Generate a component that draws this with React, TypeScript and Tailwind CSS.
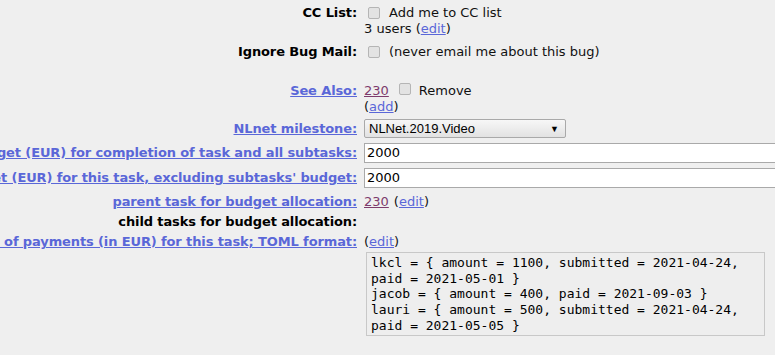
const link = 'text-[#5a67d8] underline';
const visited = 'text-[#7d3b6c] underline';

function Check() {
    return <span className="inline-block w-[12px] h-[12px] border border-[#b5b5b5] bg-[#e3e3e3] rounded-[2px]" />;
}

function Label({ children, href, h = 'h-4' }: { children: React.ReactNode; href?: boolean; h?: string }) {
    return (
        <div className={`${h} min-w-0 flex items-center justify-end whitespace-nowrap pr-[3px] font-bold tracking-[-0.12px]`}>
            {href ? <span className={link}>{children}</span> : <span className="text-black">{children}</span>}
        </div>
    );
}

export default function App() {
    return (
        <div
            className="w-[775px] h-[355px] overflow-hidden bg-[#efefef] text-[13px] leading-4 text-[#111]"
            style={{ fontFamily: '"DejaVu Sans", Verdana, sans-serif' }}
        >
            <div className="grid grid-cols-[360px_1fr] pt-[5px]">
                {/* CC list */}
                <Label>CC List:</Label>
                <div className="pl-[4px]">
                    <div className="h-4 flex items-center gap-[9px] pl-[4px]">
                        <Check />
                        <span>Add me to CC list</span>
                    </div>
                    <div className="h-4 flex items-center">
                        3 users (<span className={link}>edit</span>)
                    </div>
                </div>

                {/* ignore mail */}
                <div className="mt-[7px]"><Label>Ignore Bug Mail:</Label></div>
                <div className="mt-[7px] pl-[8px] h-4 flex items-center gap-[9px]">
                    <Check />
                    <span>(never email me about this bug)</span>
                </div>

                {/* see also */}
                <div className="mt-[23px]"><Label href>See Also:</Label></div>
                <div className="mt-[23px] pl-[4px]">
                    <div className="h-4 flex items-center">
                        <span className={visited}>230</span>
                        <span className="ml-[10px]"><Check /></span>
                        <span className="ml-[8px]">Remove</span>
                    </div>
                    <div className="h-4 flex items-center">
                        (<span className={link}>add</span>)
                    </div>
                </div>

                {/* milestone */}
                <div className="mt-[4px]"><Label href h="h-[19px]">NLnet milestone:</Label></div>
                <div className="mt-[4px] pl-[4px]">
                    <div
                        className="w-[202px] h-[19px] border border-[#a9a9a9] rounded-[2px] bg-gradient-to-b from-[#f7f7f7] to-[#e2e2e2] flex items-center justify-between pl-[4px] pr-[6px]"
                        style={{ fontFamily: '"Liberation Sans", Arial, sans-serif' }}
                    >
                        <span className="text-[13px] text-black">NLNet.2019.Video</span>
                        <span className="text-[9px] text-black">▼</span>
                    </div>
                </div>

                {/* budgets */}
                <div className="mt-[5px]"><Label href h="h-[20px]">Total budget (EUR) for completion of task and all subtasks:</Label></div>
                <div className="mt-[5px] pl-[4px]">
                    <div className="w-[430px] h-[20px] border border-[#a9a9a9] bg-white flex items-center pl-[2px] text-black">2000</div>
                </div>
                <div className="mt-[5px]"><Label href h="h-[20px]">Budget (EUR) for this task, excluding subtasks' budget:</Label></div>
                <div className="mt-[5px] pl-[4px]">
                    <div className="w-[430px] h-[20px] border border-[#a9a9a9] bg-white flex items-center pl-[2px] text-black">2000</div>
                </div>

                {/* parent / child */}
                <div className="mt-[6px]"><Label href>parent task for budget allocation:</Label></div>
                <div className="mt-[6px] pl-[4px] h-4 flex items-center">
                    <span className={visited}>230</span>
                    <span className="ml-[5px]">(<span className={link}>edit</span>)</span>
                </div>
                <div className="mt-[4px]"><Label>child tasks for budget allocation:</Label></div>
                <div className="mt-[4px]" />

                {/* payments */}
                <div className="mt-[4px]"><Label href>Summary of payments (in EUR) for this task; TOML format:</Label></div>
                <div className="mt-[4px] pl-[4px]">
                    <div className="h-4 flex items-center">
                        (<span className={link}>edit</span>)
                    </div>
                    <pre
                        className="mt-[2px] ml-[2px] w-[399px] h-[84px] border border-[#c8c8c8] bg-[#eeeeee] pt-[2px] pl-[4px] text-[13px] leading-[15.7px] text-black"
                        style={{ fontFamily: '"DejaVu Sans Mono", monospace' }}
                    >
{`lkcl = { amount = 1100, submitted = 2021-04-24,
paid = 2021-05-01 }
jacob = { amount = 400, paid = 2021-09-03 }
lauri = { amount = 500, submitted = 2021-04-24,
paid = 2021-05-05 }`}
                    </pre>
                </div>
            </div>
        </div>
    );
}
